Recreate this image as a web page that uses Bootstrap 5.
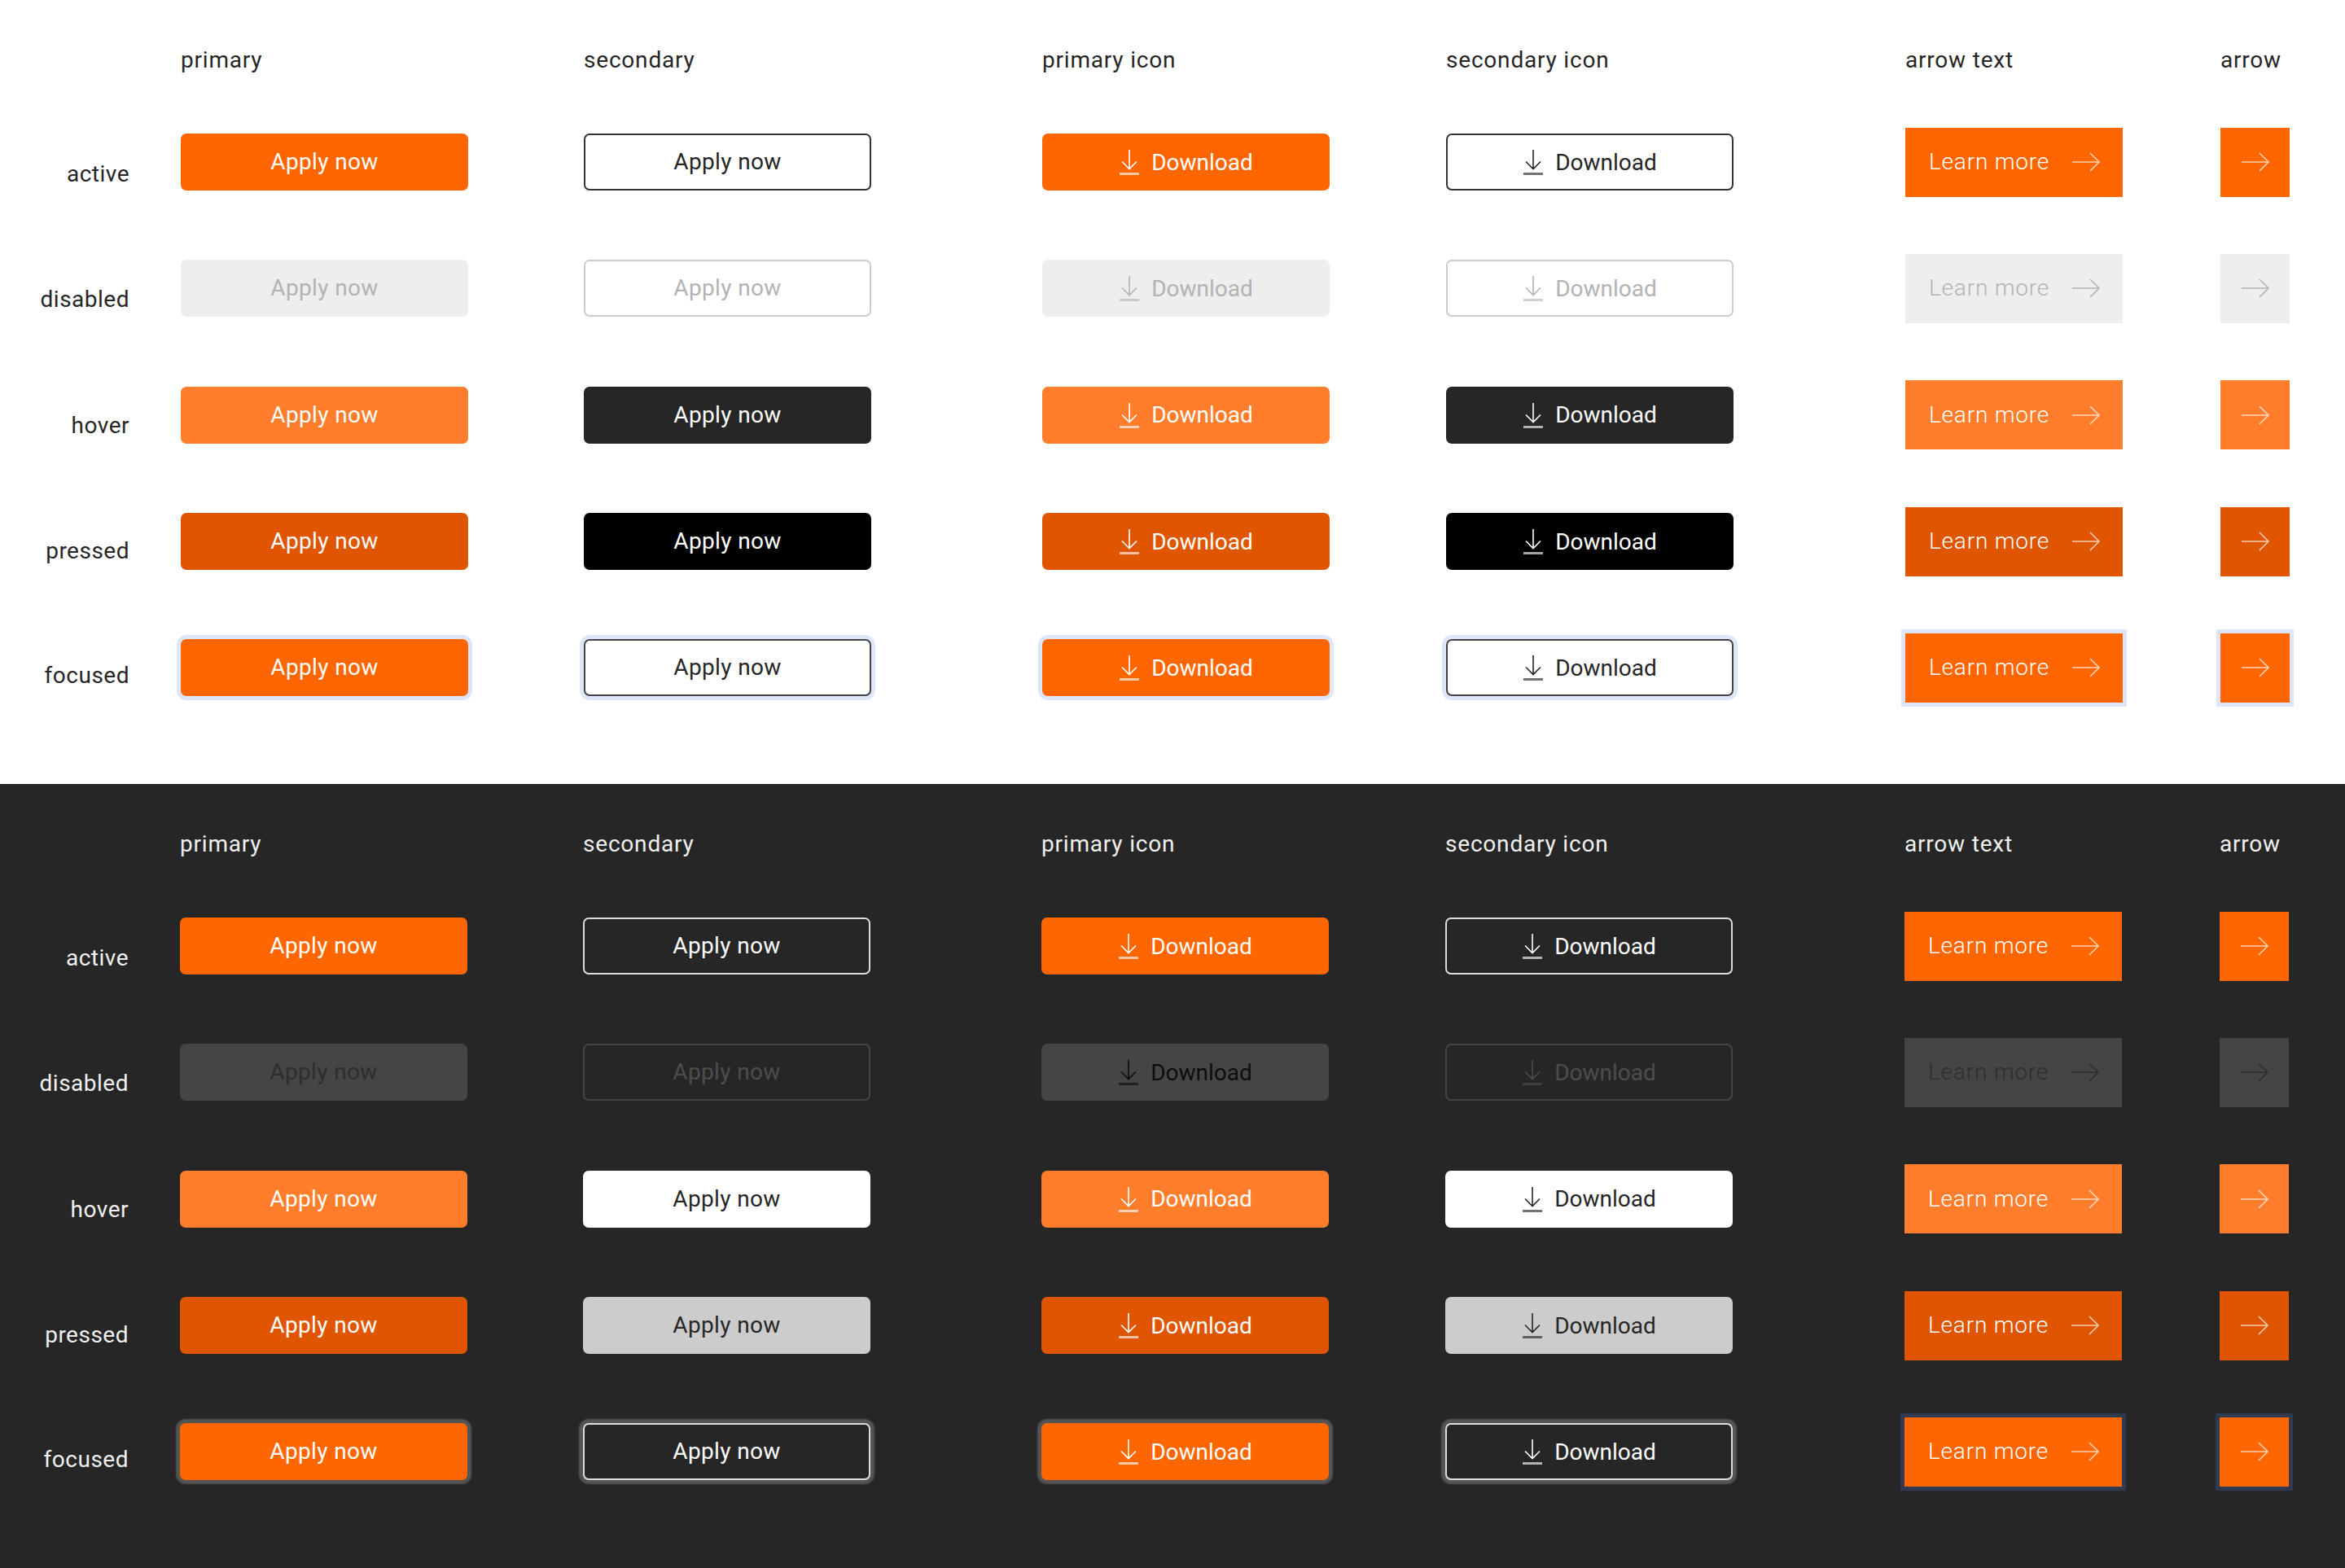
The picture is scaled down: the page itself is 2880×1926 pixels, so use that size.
<!DOCTYPE html>
<html lang="en">
<head>
<meta charset="utf-8">
<title>Button states</title>
<link href="https://cdn.jsdelivr.net/npm/bootstrap@5.3.0/dist/css/bootstrap.min.css" rel="stylesheet">
<style>
body{margin:0;font-family:"Roboto","Liberation Sans",sans-serif;}
.sheet{height:963px;padding-top:43px;}
.sheet-light{background:#fff;color:#262626;}
.sheet-dark{background:#262626;color:#f0f0f0;}
.matrix{display:grid;grid-template-columns:222px 495px 563px 496px 564px 387px 1fr;grid-template-rows:78.5px repeat(5,155.3px);}
.sheet-dark .matrix{grid-template-columns:221px 495px 563px 496px 564px 387px 1fr;}
.head{font-size:28px;line-height:62px;letter-spacing:.8px;font-weight:400;}
.state{font-size:28px;line-height:34px;letter-spacing:.5px;font-weight:400;text-align:right;padding:75px 63px 0 0;}
.state-2{padding-top:74.500px;}
.state-3{padding-top:74px;}
.state-4{padding-top:72.500px;}
.state-5{padding-top:70px;}
.cell{display:flex;align-items:center;}
.act{display:inline-flex;align-items:center;justify-content:center;gap:14px;font-size:28px;line-height:34px;letter-spacing:.35px;font-weight:400;border:2px solid transparent;padding:0;}
.wide{width:353px;height:70px;border-radius:7px;}
.wide.with-ico{padding-top:1px;letter-spacing:0;}
.btn.tile{height:85px;border-radius:0;border:0;font-weight:300;}
.tile-text{width:267px;justify-content:space-between;padding:0 27px 0 29px;letter-spacing:.8px;}
.tile-arrow{width:85px;}
.ico-down{width:26px;height:31px;flex:none;}
.ico-arrow{width:36px;height:26px;flex:none;}
.ico-down,.ico-arrow{fill:none;stroke:currentColor;stroke-width:1.6;}
.ico-soft{opacity:.7;}
.btn.o-active{background:#f60;color:#fff;border-color:transparent;}
.btn.o-hover{background:#ff7d2b;color:#fff;border-color:transparent;}
.btn.o-pressed{background:#df5500;color:#fff;border-color:transparent;}
.btn.o-focus{background:#f60;color:#fff;border-color:transparent;box-shadow:0 0 0 5px #dfe6fa;}
.btn.o-off{background:#eee;color:#b3b3b3;border-color:transparent;opacity:1;}
.btn.s-active{background:#fff;color:#262626;border-color:#333;}
.btn.s-off{background:#fff;color:#b3b3b3;border-color:#ccc;opacity:1;}
.btn.s-hover{background:#262626;color:#fff;border-color:transparent;}
.btn.s-pressed{background:#000;color:#fff;border-color:transparent;}
.btn.s-focus{background:#fff;color:#262626;border-color:#444;box-shadow:0 0 0 5px #dfe6fa;}
.sheet-dark .btn.o-focus{box-shadow:0 0 2px 5px #555;}
.sheet-dark .btn.tile.o-focus{box-shadow:0 0 1px 5px #2f3950;}
.sheet-dark .btn.o-off{background:#454545;color:#2e2e2e;}
.sheet-dark .btn.o-off-ink{color:#0d0d0d;}
.sheet-dark .btn.s-active{background:#262626;color:#fff;border-color:#ddd;}
.sheet-dark .btn.s-off{background:#262626;color:#4d4d4d;border-color:#454545;}
.sheet-dark .btn.s-hover{background:#fff;color:#262626;}
.sheet-dark .btn.s-pressed{background:#ccc;color:#262626;}
.sheet-dark .btn.s-focus{background:#262626;color:#fff;border-color:#ddd;box-shadow:0 0 2px 5px #555;}
</style>
</head>
<body>
<svg width="0" height="0" class="d-block position-absolute">
<symbol id="down" viewBox="0 0 26 31"><path d="M13 0V23.500M4 14.500l9 9 9-9"/><path d="M1 29.500H25" stroke-width="3" opacity=".65"/></symbol>
<symbol id="right" viewBox="0 0 36 26"><path d="M1 13H34M23 2l11 11-11 11"/></symbol>
</svg>

<section class="sheet sheet-light"><div class="matrix">
<div></div><div class="head">primary</div><div class="head">secondary</div><div class="head">primary icon</div><div class="head">secondary icon</div><div class="head">arrow text</div><div class="head">arrow</div>

<div class="state">active</div>
<div class="cell"><button class="btn act wide o-active">Apply now</button></div>
<div class="cell"><button class="btn act wide s-active">Apply now</button></div>
<div class="cell"><button class="btn act wide with-ico o-active"><svg class="ico-down"><use href="#down"/></svg>Download</button></div>
<div class="cell"><button class="btn act wide with-ico s-active"><svg class="ico-down"><use href="#down"/></svg>Download</button></div>
<div class="cell"><button class="btn act tile tile-text o-active">Learn more<svg class="ico-arrow ico-soft"><use href="#right"/></svg></button></div>
<div class="cell"><button class="btn act tile tile-arrow o-active" aria-label="arrow"><svg class="ico-arrow ico-soft"><use href="#right"/></svg></button></div>

<div class="state state-2">disabled</div>
<div class="cell"><button class="btn act wide o-off" disabled>Apply now</button></div>
<div class="cell"><button class="btn act wide s-off" disabled>Apply now</button></div>
<div class="cell"><button class="btn act wide with-ico o-off" disabled><svg class="ico-down"><use href="#down"/></svg>Download</button></div>
<div class="cell"><button class="btn act wide with-ico s-off" disabled><svg class="ico-down"><use href="#down"/></svg>Download</button></div>
<div class="cell"><button class="btn act tile tile-text o-off" disabled>Learn more<svg class="ico-arrow"><use href="#right"/></svg></button></div>
<div class="cell"><button class="btn act tile tile-arrow o-off" disabled aria-label="arrow"><svg class="ico-arrow"><use href="#right"/></svg></button></div>

<div class="state state-3">hover</div>
<div class="cell"><button class="btn act wide o-hover">Apply now</button></div>
<div class="cell"><button class="btn act wide s-hover">Apply now</button></div>
<div class="cell"><button class="btn act wide with-ico o-hover"><svg class="ico-down"><use href="#down"/></svg>Download</button></div>
<div class="cell"><button class="btn act wide with-ico s-hover"><svg class="ico-down"><use href="#down"/></svg>Download</button></div>
<div class="cell"><button class="btn act tile tile-text o-hover">Learn more<svg class="ico-arrow ico-soft"><use href="#right"/></svg></button></div>
<div class="cell"><button class="btn act tile tile-arrow o-hover" aria-label="arrow"><svg class="ico-arrow ico-soft"><use href="#right"/></svg></button></div>

<div class="state state-4">pressed</div>
<div class="cell"><button class="btn act wide o-pressed">Apply now</button></div>
<div class="cell"><button class="btn act wide s-pressed">Apply now</button></div>
<div class="cell"><button class="btn act wide with-ico o-pressed"><svg class="ico-down"><use href="#down"/></svg>Download</button></div>
<div class="cell"><button class="btn act wide with-ico s-pressed"><svg class="ico-down"><use href="#down"/></svg>Download</button></div>
<div class="cell"><button class="btn act tile tile-text o-pressed">Learn more<svg class="ico-arrow ico-soft"><use href="#right"/></svg></button></div>
<div class="cell"><button class="btn act tile tile-arrow o-pressed" aria-label="arrow"><svg class="ico-arrow ico-soft"><use href="#right"/></svg></button></div>

<div class="state state-5">focused</div>
<div class="cell"><button class="btn act wide o-focus">Apply now</button></div>
<div class="cell"><button class="btn act wide s-focus">Apply now</button></div>
<div class="cell"><button class="btn act wide with-ico o-focus"><svg class="ico-down"><use href="#down"/></svg>Download</button></div>
<div class="cell"><button class="btn act wide with-ico s-focus"><svg class="ico-down"><use href="#down"/></svg>Download</button></div>
<div class="cell"><button class="btn act tile tile-text o-focus">Learn more<svg class="ico-arrow ico-soft"><use href="#right"/></svg></button></div>
<div class="cell"><button class="btn act tile tile-arrow o-focus" aria-label="arrow"><svg class="ico-arrow ico-soft"><use href="#right"/></svg></button></div>
</div></section>

<section class="sheet sheet-dark"><div class="matrix">
<div></div><div class="head">primary</div><div class="head">secondary</div><div class="head">primary icon</div><div class="head">secondary icon</div><div class="head">arrow text</div><div class="head">arrow</div>

<div class="state">active</div>
<div class="cell"><button class="btn act wide o-active">Apply now</button></div>
<div class="cell"><button class="btn act wide s-active">Apply now</button></div>
<div class="cell"><button class="btn act wide with-ico o-active"><svg class="ico-down"><use href="#down"/></svg>Download</button></div>
<div class="cell"><button class="btn act wide with-ico s-active"><svg class="ico-down"><use href="#down"/></svg>Download</button></div>
<div class="cell"><button class="btn act tile tile-text o-active">Learn more<svg class="ico-arrow ico-soft"><use href="#right"/></svg></button></div>
<div class="cell"><button class="btn act tile tile-arrow o-active" aria-label="arrow"><svg class="ico-arrow ico-soft"><use href="#right"/></svg></button></div>

<div class="state state-2">disabled</div>
<div class="cell"><button class="btn act wide o-off" disabled>Apply now</button></div>
<div class="cell"><button class="btn act wide s-off" disabled>Apply now</button></div>
<div class="cell"><button class="btn act wide with-ico o-off o-off-ink" disabled><svg class="ico-down"><use href="#down"/></svg>Download</button></div>
<div class="cell"><button class="btn act wide with-ico s-off" disabled><svg class="ico-down"><use href="#down"/></svg>Download</button></div>
<div class="cell"><button class="btn act tile tile-text o-off" disabled>Learn more<svg class="ico-arrow"><use href="#right"/></svg></button></div>
<div class="cell"><button class="btn act tile tile-arrow o-off" disabled aria-label="arrow"><svg class="ico-arrow"><use href="#right"/></svg></button></div>

<div class="state state-3">hover</div>
<div class="cell"><button class="btn act wide o-hover">Apply now</button></div>
<div class="cell"><button class="btn act wide s-hover">Apply now</button></div>
<div class="cell"><button class="btn act wide with-ico o-hover"><svg class="ico-down"><use href="#down"/></svg>Download</button></div>
<div class="cell"><button class="btn act wide with-ico s-hover"><svg class="ico-down"><use href="#down"/></svg>Download</button></div>
<div class="cell"><button class="btn act tile tile-text o-hover">Learn more<svg class="ico-arrow ico-soft"><use href="#right"/></svg></button></div>
<div class="cell"><button class="btn act tile tile-arrow o-hover" aria-label="arrow"><svg class="ico-arrow ico-soft"><use href="#right"/></svg></button></div>

<div class="state state-4">pressed</div>
<div class="cell"><button class="btn act wide o-pressed">Apply now</button></div>
<div class="cell"><button class="btn act wide s-pressed">Apply now</button></div>
<div class="cell"><button class="btn act wide with-ico o-pressed"><svg class="ico-down"><use href="#down"/></svg>Download</button></div>
<div class="cell"><button class="btn act wide with-ico s-pressed"><svg class="ico-down"><use href="#down"/></svg>Download</button></div>
<div class="cell"><button class="btn act tile tile-text o-pressed">Learn more<svg class="ico-arrow ico-soft"><use href="#right"/></svg></button></div>
<div class="cell"><button class="btn act tile tile-arrow o-pressed" aria-label="arrow"><svg class="ico-arrow ico-soft"><use href="#right"/></svg></button></div>

<div class="state state-5">focused</div>
<div class="cell"><button class="btn act wide o-focus">Apply now</button></div>
<div class="cell"><button class="btn act wide s-focus">Apply now</button></div>
<div class="cell"><button class="btn act wide with-ico o-focus"><svg class="ico-down"><use href="#down"/></svg>Download</button></div>
<div class="cell"><button class="btn act wide with-ico s-focus"><svg class="ico-down"><use href="#down"/></svg>Download</button></div>
<div class="cell"><button class="btn act tile tile-text o-focus">Learn more<svg class="ico-arrow ico-soft"><use href="#right"/></svg></button></div>
<div class="cell"><button class="btn act tile tile-arrow o-focus" aria-label="arrow"><svg class="ico-arrow ico-soft"><use href="#right"/></svg></button></div>
</div></section>
<script src="https://cdn.jsdelivr.net/npm/bootstrap@5.3.0/dist/js/bootstrap.bundle.min.js"></script>
</body>
</html>
